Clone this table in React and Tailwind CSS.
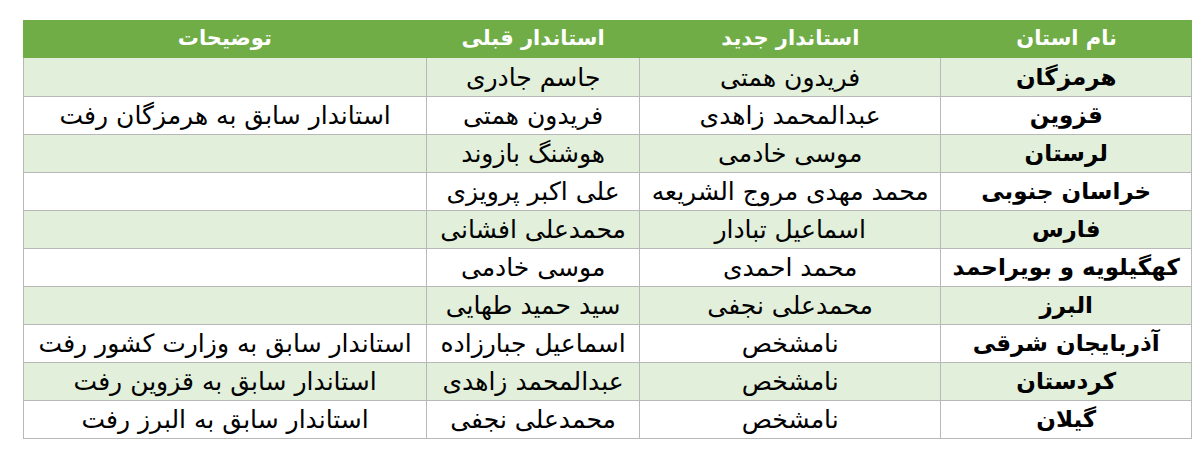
export default function App() {
  const rows = [
    ["هرمزگان", "فریدون همتی", "جاسم جادری", ""],
    ["قزوین", "عبدالمحمد زاهدی", "فریدون همتی", "استاندار سابق به هرمزگان رفت"],
    ["لرستان", "موسی خادمی", "هوشنگ بازوند", ""],
    ["خراسان جنوبی", "محمد مهدی مروج الشریعه", "علی اکبر پرویزی", ""],
    ["فارس", "اسماعیل تبادار", "محمدعلی افشانی", ""],
    ["کهگیلویه و بویراحمد", "محمد احمدی", "موسی خادمی", ""],
    ["البرز", "محمدعلی نجفی", "سید حمید طهایی", ""],
    ["آذربایجان شرقی", "نامشخص", "اسماعیل جبارزاده", "استاندار سابق به وزارت کشور رفت"],
    ["کردستان", "نامشخص", "عبدالمحمد زاهدی", "استاندار سابق به قزوین رفت"],
    ["گیلان", "نامشخص", "محمدعلی نجفی", "استاندار سابق به البرز رفت"],
  ];
  const headers = ["نام استان", "استاندار جدید", "استاندار قبلی", "توضیحات"];
  const widths = ["w-[250px]", "w-[302px]", "w-[213px]", "w-[404px]"];
  return (
    <div className="w-[1200px] h-[454px] bg-white pt-[20px] pl-[23px]" style={{ fontFamily: '"DejaVu Sans", sans-serif' }}>
      <div dir="rtl" className="w-[1169px] border border-[#b8b8b8]">
        <div className="flex h-[38px] bg-[#70ad47] text-white font-bold text-[21px] -mt-px -mx-px">
          {headers.map((h, i) => (
            <div key={i} className={`${widths[i]} flex items-center justify-center ${i === 0 ? "w-[251px]" : ""}`}>{h}</div>
          ))}
        </div>
        {rows.map((r, ri) => (
          <div key={ri} className={`flex h-[38px] ${ri % 2 === 0 ? "bg-[#e2efda]" : "bg-white"} ${ri > 0 ? "border-t border-[#b8b8b8]" : ""}`}>
            {r.map((c, ci) => (
              <div
                key={ci}
                className={`${widths[ci]} flex items-center justify-center text-black leading-none whitespace-nowrap ${ci > 0 ? "border-r border-[#b8b8b8] text-[25px]" : "font-bold text-[23px]"}`}
              >
                {c}
              </div>
            ))}
          </div>
        ))}
      </div>
    </div>
  );
}
